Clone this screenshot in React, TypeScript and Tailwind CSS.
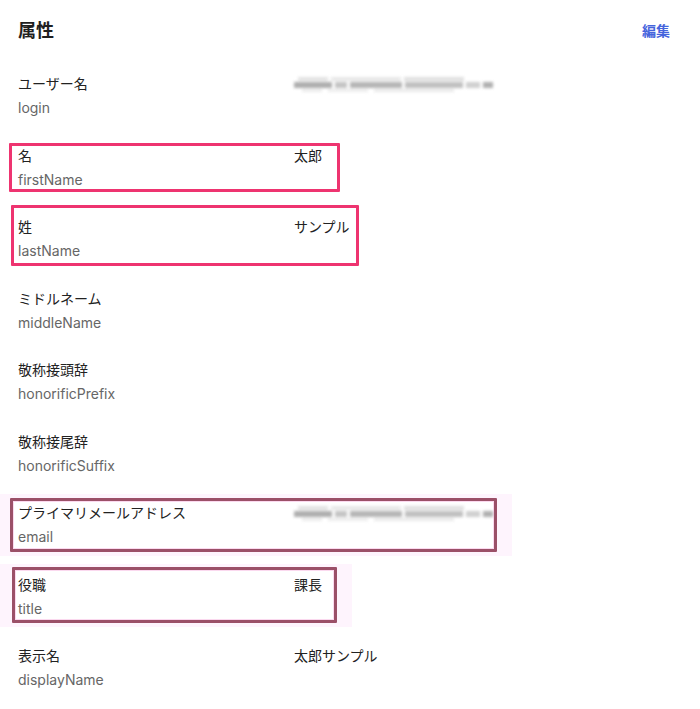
import React from "react"

type Row = {
  label: string
  key: string
  value?: string
  blur?: boolean
  mark?: "pink" | "mauve"
  box?: string
  halo?: string
}

const rows: Row[] = [
  { label: "ユーザー名", key: "login", blur: true },
  { label: "名", key: "firstName", value: "太郎", mark: "pink", box: "top-[11.5px] left-[9px] w-[331px] h-[49px]" },
  { label: "姓", key: "lastName", value: "サンプル", mark: "pink", box: "top-[2px] left-[11px] w-[348px] h-[61px]" },
  { label: "ミドルネーム", key: "middleName" },
  { label: "敬称接頭辞", key: "honorificPrefix" },
  { label: "敬称接尾辞", key: "honorificSuffix" },
  {
    label: "プライマリメールアドレス",
    key: "email",
    blur: true,
    mark: "mauve",
    box: "top-[9px] left-[10px] w-[487px] h-[54px]",
    halo: "top-[5px] h-[62px] left-0 w-[512px]",
  },
  {
    label: "役職",
    key: "title",
    value: "課長",
    mark: "mauve",
    box: "top-[6.5px] left-[12px] w-[325px] h-[56px]",
    halo: "top-[3px] h-[63px] left-0 w-[352px]",
  },
  { label: "表示名", key: "displayName", value: "太郎サンプル" },
]

function Blurred() {
  return (
    <div className="h-6 flex flex-col justify-center gap-[1px] blur-[1.5px] opacity-80">
      <div className="flex gap-[3px] pl-[4px]">
        <div className="h-[4px] w-[30px] bg-[#dcdcdc]" />
        <div className="h-[4px] w-[70px] bg-[#e2e2e2]" />
        <div className="h-[4px] w-[60px] bg-[#d8d8d8]" />
      </div>
      <div className="flex gap-[3px]">
        <div className="h-[6px] w-[38px] bg-[#9a9a9a]" />
        <div className="h-[6px] w-[12px] bg-[#b5b5b5]" />
        <div className="h-[6px] w-[52px] bg-[#a3a3a3]" />
        <div className="h-[6px] w-[58px] bg-[#b0b0b0]" />
        <div className="h-[6px] w-[14px] bg-[#c4c4c4]" />
        <div className="h-[6px] w-[10px] bg-[#9c9c9c]" />
      </div>
      <div className="flex gap-[6px] pl-[8px]">
        <div className="h-[3px] w-[20px] bg-[#e6e6e6]" />
        <div className="h-[3px] w-[40px] bg-[#e8e8e8]" />
        <div className="h-[3px] w-[80px] bg-[#e4e4e4]" />
      </div>
    </div>
  )
}

export default function App() {
  return (
    <div className="w-[700px] bg-white text-[14px] text-[#222]" style={{ fontFamily: "Inter, 'Noto Sans CJK JP', sans-serif" }}>
      <div className="h-[60px] flex items-center justify-between pl-[18px] pr-[30px]">
        <h1 className="text-[18px] font-bold text-[#1f1f1f]">属性</h1>
        <a className="text-[14px] font-bold text-[#4564dc]">編集</a>
      </div>
      {rows.map((r) => (
        <div key={r.key} className="relative h-[71.5px] pt-[12px] px-[18px]">
          {r.halo && <div className={`absolute ${r.halo} bg-[#fef4fd]`} />}
          {r.mark === "pink" && (
            <div className={`absolute ${r.box} border-[3px] border-[#ee3470] rounded-[1px]`} />
          )}
          {r.mark === "mauve" && (
            <div className={`absolute ${r.box} border-[3px] border-[#9b5068] bg-white rounded-[1px] shadow-[inset_0_0_0_1px_#fbd9ef]`} />
          )}
          <div className="relative grid grid-cols-[276px_1fr]">
            <div>
              <div className="leading-6">{r.label}</div>
              <div className="leading-6 text-[#666]">{r.key}</div>
            </div>
            <div className="leading-6">{r.blur ? <Blurred /> : r.value}</div>
          </div>
        </div>
      ))}
    </div>
  )
}
